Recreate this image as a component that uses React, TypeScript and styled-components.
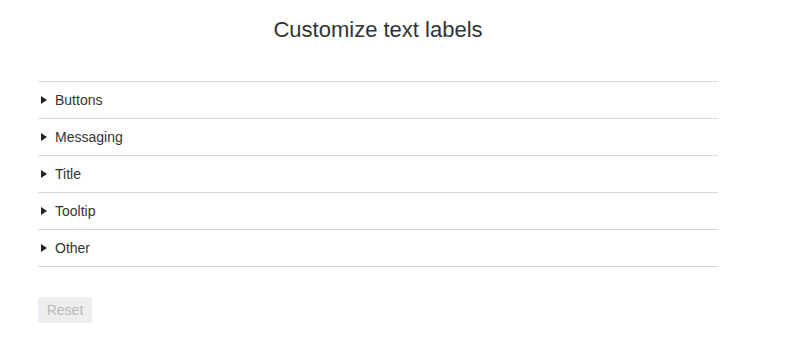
import styled, { createGlobalStyle } from "styled-components";

const GlobalStyle = createGlobalStyle`
  body {
    margin: 0;
    background: #ffffff;
    font-family: "Liberation Sans", Arial, sans-serif;
    color: #333333;
  }
`;

const sections = ["Buttons", "Messaging", "Title", "Tooltip", "Other"];

const App = () => {
  return (
    <>
      <GlobalStyle />
      <Page>
        <Title>Customize text labels</Title>
        <List>
          {sections.map((s) => (
            <Row key={s}>
              <Arrow />
              <Label>{s}</Label>
            </Row>
          ))}
        </List>
        <ResetButton disabled>Reset</ResetButton>
      </Page>
    </>
  );
};

export default App;

const Page = styled.div`
  width: 680px;
  margin-left: 38px;
  padding-top: 17px;
`;

const Title = styled.h1`
  margin: 0;
  text-align: center;
  font-size: 22px;
  font-weight: 400;
  line-height: 26px;
  color: #333333;
`;

const List = styled.div`
  margin-top: 38px;
  border-top: 1px solid #d6d6d6;
`;

const Row = styled.div`
  display: flex;
  align-items: center;
  height: 36px;
  border-bottom: 1px solid #d6d6d6;
  padding-left: 3px;
  cursor: pointer;
`;

const Arrow = styled.span`
  width: 0;
  height: 0;
  border-top: 4px solid transparent;
  border-bottom: 4px solid transparent;
  border-left: 6px solid #222222;
  margin-right: 8px;
`;

const Label = styled.span`
  font-size: 14px;
  color: #333333;
`;

const ResetButton = styled.button`
  margin-top: 30px;
  width: 54px;
  height: 26px;
  border: none;
  border-radius: 2px;
  background: #eeeeee;
  color: #b9b9b9;
  font-family: "Liberation Sans", Arial, sans-serif;
  font-size: 14px;
  padding: 0;
`;
